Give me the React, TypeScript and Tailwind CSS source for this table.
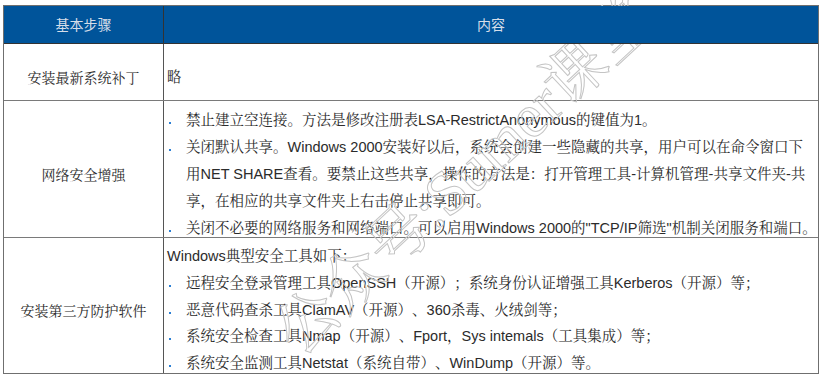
const song = 'font-["Liberation_Sans","Noto_Serif_CJK_SC","Noto_Sans_CJK_SC",sans-serif]';

function Bullet({ children }: { children: React.ReactNode }) {
  return (
    <div className="flex">
      <span className="w-[19px] shrink-0">
        <span className="mt-[15px] ml-[2px] block h-[2px] w-[2px] bg-[#2b7fd4]" />
      </span>
      <span className="whitespace-nowrap">{children}</span>
    </div>
  );
}

export default function App() {
  return (
    <div className={`relative h-[384px] w-[825px] overflow-hidden bg-white [text-spacing-trim:space-all] ${song}`}>
      {/* watermark */}
      <span className="pointer-events-none absolute left-[464px] top-[176px] -translate-x-1/2 -translate-y-1/2 -rotate-[43deg] whitespace-nowrap font-['Liberation_Serif','Noto_Serif_CJK_SC','Noto_Sans_CJK_SC',serif] text-[62px] leading-none text-transparent [-webkit-text-stroke:1px_#c4c4c4]">
        公众号:Sumer课堂
      </span>

      <div className="ml-[3px] mt-[5px] w-[816px] border border-[#6f6f6f] text-[14.5px] text-[#2b2b2b]">
        {/* header */}
        <div className="relative z-10 flex h-[38px] border-b border-[#333] bg-[#00549a] font-['Noto_Sans_CJK_SC',sans-serif] text-[14px] text-[#d6dee9]">
          <div className="flex w-[160px] items-center justify-center border-r border-[#333]">基本步骤</div>
          <div className="flex flex-1 items-center justify-center">内容</div>
        </div>

        {/* row 1 */}
        <div className="flex h-[57px] border-b border-[#7a7a7a]">
          <div className="flex w-[160px] items-center justify-center border-r border-[#555] pt-[12px] text-[14px]">
            安装最新系统补丁
          </div>
          <div className="flex flex-1 items-center pl-[3px] pt-[12px]">略</div>
        </div>

        {/* row 2 */}
        <div className="flex h-[137px] border-b border-[#7a7a7a]">
          <div className="flex w-[160px] items-center justify-center border-r border-[#555] pt-[12px] text-[14px]">
            网络安全增强
          </div>
          <div className="flex-1 pl-[3px] pt-[6px] leading-[27px]">
            <Bullet>禁止建立空连接。方法是修改注册表LSA-RestrictAnonymous的键值为1。</Bullet>
            <Bullet>
              关闭默认共享。Windows 2000安装好以后，系统会创建一些隐藏的共享，用户可以在命令窗口下
              <br />
              用NET SHARE查看。要禁止这些共享，操作的方法是：打开管理工具-计算机管理-共享文件夹-共
              <br />
              享，在相应的共享文件夹上右击停止共享即可。
            </Bullet>
            <Bullet>关闭不必要的网络服务和网络端口。可以启用Windows 2000的"TCP/IP筛选"机制关闭服务和端口。</Bullet>
          </div>
        </div>

        {/* row 3 */}
        <div className="flex h-[135px]">
          <div className="flex w-[160px] items-center justify-center border-r border-[#555] pt-[12px] text-[14px]">
            安装第三方防护软件
          </div>
          <div className="flex-1 pl-[3px] pt-[5px] leading-[26.8px]">
            <div className="whitespace-nowrap">Windows典型安全工具如下：</div>
            <Bullet>远程安全登录管理工具OpenSSH（开源）；系统身份认证增强工具Kerberos（开源）等；</Bullet>
            <Bullet>恶意代码查杀工具ClamAV（开源）、360杀毒、火绒剑等；</Bullet>
            <Bullet>系统安全检查工具Nmap（开源）、Fport，Sys intemals（工具集成）等；</Bullet>
            <Bullet>系统安全监测工具Netstat（系统自带）、WinDump（开源）等。</Bullet>
          </div>
        </div>
      </div>
    </div>
  );
}
